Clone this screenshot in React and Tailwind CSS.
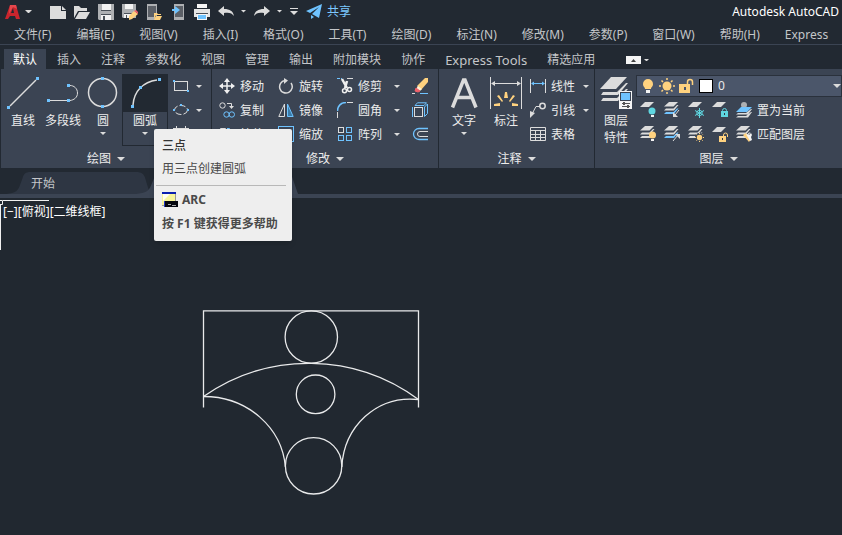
import clsx from "clsx";

const menus = ["文件(F)", "编辑(E)", "视图(V)", "插入(I)", "格式(O)", "工具(T)", "绘图(D)", "标注(N)", "修改(M)", "参数(P)", "窗口(W)", "帮助(H)", "Express"];

const ribbonTabs = ["默认", "插入", "注释", "参数化", "视图", "管理", "输出", "附加模块", "协作", "Express Tools", "精选应用"];

const W = "#dcdcdc";
const B = "#6fc3ff";
const Y = "#ffd27f";
const C = "#5fd6e0";

function Icon({ size = 16, children }) {
  return (
    <svg
      width={size}
      height={size}
      viewBox={`0 0 ${size} ${size}`}
      fill="none"
      stroke={W}
      className="block shrink-0"
      aria-hidden="true"
    >
      {children}
    </svg>
  );
}

function Caret({ className }) {
  return (
    <svg viewBox="0 0 8 4" className={clsx("block shrink-0 fill-[#dcdcdc]", className)} aria-hidden="true">
      <path d="M0 0h8L4 4z" />
    </svg>
  );
}

// stacked sheet used by every layer tool
function Sheets({ middle = W, bottom = W }) {
  return (
    <g stroke="none">
      <path d="M5 0h9L9.500 4.500H0z" fill={W} />
      <path d="M2 6.500h7.500l3.500-3.500h1.500L10 8.500H0z" fill={middle} />
      <path d="M2 10h7.500l3.500-3.500h1.500L10 12H0z" fill={bottom} />
    </g>
  );
}

function Dot({ x, y, size = 3 }) {
  return <rect x={x} y={y} width={size} height={size} fill={B} stroke="none" />;
}

const quickTools = [
  {
    name: "新建",
    icon: <path d="M0 2h11v5h5v8H0zM12 2l4 4h-4z" fill={W} stroke="none" />,
  },
  {
    name: "打开",
    icon: (
      <g fill={W} stroke="none">
        <path d="M0 2h5l2 2h6v3H4L0 14z" />
        <path d="M5 8h11l-4 7H1z" />
      </g>
    ),
  },
  {
    name: "保存",
    icon: (
      <g stroke="none">
        <path d="M0 0h16v16H1l-1-1z" fill="#aeb0b3" />
        <path d="M4 0h9v6H4z" fill="#f2f2f2" />
        <path d="M3 11h10v5H3z" fill="#f2f2f2" />
        <path d="M3 10h10v1H3zM5 12h2v4H5zM3 6h10v1H3z" fill="#4a5058" />
      </g>
    ),
  },
  {
    name: "另存为",
    icon: (
      <g stroke="none">
        <path d="M0 0h14v14H1l-1-1z" fill="#aeb0b3" />
        <path d="M3 0h8v5H3z" fill="#f2f2f2" />
        <path d="M2 10h8v4H2z" fill="#f2f2f2" />
        <path d="M2 9h9v1H2zM4 11h1v3H4z" fill="#4a5058" />
        <path d="M7 12l5-5 4 3-6 5-3 1z" fill={Y} />
        <path d="M12 7l2-1 2 2v2z" fill="#f0616a" />
      </g>
    ),
  },
  {
    name: "从移动设备打开",
    icon: (
      <g stroke="none">
        <path d="M1 0h10v16H1z" fill="#aeb0b3" />
        <path d="M2 2h8v11H2z" fill="#5c6067" />
        <path d="M8 9h3l1 1h3v1h-5l-2 4z" fill={Y} />
        <path d="M10 12h6l-2 4H8z" fill={Y} />
      </g>
    ),
  },
  {
    name: "保存到移动设备",
    icon: (
      <g stroke="none">
        <path d="M4 0h10v16H4z" fill="#aeb0b3" />
        <path d="M5 2h8v11H5z" fill="#5c6067" />
        <path d="M2 5h3V2l5 4-5 4V7H2z" fill={B} />
      </g>
    ),
  },
  {
    name: "打印",
    icon: (
      <g stroke="none">
        <path d="M3 0h10v4H3z" fill="#f5f5f5" />
        <path d="M0 5h16v8H0z" fill="#e6e6e6" />
        <path d="M2 9h12v1H2z" fill="#4a5058" />
        <path d="M3 10h10v6H3z" fill="#f5f5f5" />
        <path d="M4 11h8v4H4z" fill={B} />
      </g>
    ),
  },
  {
    name: "放弃",
    icon: <path d="M0 7l6-5v3c6 0 9 2 10 7-2-3-5-4-10-3v3z" fill={W} stroke="none" />,
    more: true,
  },
  {
    name: "重做",
    icon: <path d="M16 7l-6-5v3c-6 0-9 2-10 7 2-3 5-4 10-3v3z" fill={W} stroke="none" />,
    more: true,
  },
];

const modifyColumns = [
  [
    {
      label: "移动",
      icon: (
        <g>
          <path d="M8 2v12M2 8h12" stroke="#f0f0f0" strokeWidth="1.500" />
          <path d="M8 0l3 4H5zM8 16l3-4H5zM0 8l4-3v6zM16 8l-4-3v6z" fill="#f0f0f0" stroke="none" />
        </g>
      ),
    },
    {
      label: "复制",
      icon: (
        <g>
          <circle cx="3.500" cy="3.500" r="2.700" />
          <circle cx="7.500" cy="12.500" r="2.700" stroke={B} />
          <circle cx="12.800" cy="12.500" r="2.700" stroke={B} />
          <path d="M8 1.500h4.500V4" />
          <path d="M10 4h5L12.500 7z" fill={W} stroke="none" />
        </g>
      ),
    },
    {
      label: "拉伸",
      icon: (
        <g>
          <path d="M1.500 14V2.500h5V14" />
          <path d="M8 2.500h2.500l1 2V14" stroke={B} />
        </g>
      ),
    },
  ],
  [
    {
      label: "旋转",
      icon: (
        <g>
          <path d="M7 2.500a6.300 6.300 0 1 0 6 2.500" strokeWidth="1.500" />
          <path d="M6 0l4 2.500L6 6z" fill={W} stroke="none" />
        </g>
      ),
    },
    {
      label: "镜像",
      icon: (
        <g>
          <path d="M6.500 2v12.500H.8z" />
          <path d="M9.500 2v12.500h5.700z" stroke={B} fill="#3a7ba8" />
        </g>
      ),
    },
    {
      label: "缩放",
      icon: (
        <g>
          <rect x=".5" y=".5" width="15" height="15" stroke={B} />
          <rect x=".5" y="8.500" width="7" height="7" />
        </g>
      ),
    },
  ],
  [
    {
      label: "修剪",
      icon: (
        <g>
          <path d="M0 .5h5" strokeDasharray="3 1" stroke={B} />
          <path d="M10 .5h6" />
          <path d="M5 1l5 9M10 3l-2 7" strokeWidth="2.500" stroke="#f0f0f0" />
          <circle cx="7.500" cy="12.800" r="2" stroke="#f0f0f0" strokeWidth="1.500" />
          <circle cx="12.500" cy="11.500" r="2" stroke="#f0f0f0" strokeWidth="1.500" />
        </g>
      ),
    },
    {
      label: "圆角",
      icon: (
        <g>
          <path d="M.5 9C.5 4 4 .5 9 .5" stroke={B} strokeWidth="1.500" />
          <path d="M.5 10v6M10 .5h6" />
        </g>
      ),
    },
    {
      label: "阵列",
      icon: (
        <g>
          <rect x="1.500" y="1.500" width="5" height="5" />
          <rect x="9.500" y="1.500" width="5" height="5" stroke={B} />
          <rect x="1.500" y="9.500" width="5" height="5" stroke={B} />
          <rect x="9.500" y="9.500" width="5" height="5" stroke={B} />
        </g>
      ),
    },
  ],
];

const modifyExtras = [
  {
    name: "删除",
    icon: (
      <g stroke="none">
        <path d="M5 8l8-8h3v4l-7 8z" fill={Y} />
        <path d="M6 8l4 3-2 2-4-2z" fill="#fff3d6" />
        <path d="M4 10l4 3-2 1-3-1z" fill="#f0616a" stroke="#f0616a" />
        <path d="M0 15h3v1H0z" fill={W} />
        <path d="M8 15h8v1H8z" fill={B} />
      </g>
    ),
  },
  {
    name: "分解",
    icon: (
      <g stroke={B}>
        <path d="M3 3.500L5.500 .8h9l-2.500 2.700zM12.500 14.500l3-3V2L12.500 5z" />
        <rect x="2.500" y="5.500" width="8" height="9" stroke={W} />
        <path d="M.5 5v10" />
      </g>
    ),
  },
  {
    name: "偏移",
    icon: (
      <g>
        <path d="M16 2.500H7a5.500 5.500 0 0 0 0 11h9" stroke={B} strokeWidth="1.300" />
        <path d="M16 5.500H8a2.500 2.500 0 0 0 0 5h8" />
      </g>
    ),
  },
];

const annotateTools = [
  {
    label: "线性",
    more: true,
    icon: (
      <g>
        <path d="M.5 1v14M15.500 1v14" />
        <path d="M2 5.500h12" stroke={B} />
        <path d="M1 5.500l3-2v4zM15 5.500l-3-2v4z" fill={B} stroke="none" />
      </g>
    ),
  },
  {
    label: "引线",
    more: true,
    icon: (
      <g>
        <circle cx="12.500" cy="4" r="2.700" strokeWidth="1.500" />
        <path d="M10 4.500H6L2 12" />
        <path d="M0 9l5 2-5 5z" fill={W} stroke="none" />
      </g>
    ),
  },
  {
    label: "表格",
    icon: <path d="M.5 1.500h15v13H.5zM0 4.500h16M0 8.500h16M0 11.500h16M5.500 5v9M10.500 5v9" />,
  },
];

const layerRows = [
  {
    label: "置为当前",
    icon: (
      <g stroke="none">
        <circle cx="8" cy="3" r="3" fill="#aeb0b3" />
        <path d="M5 5h11l-5 5H0z" fill={B} />
        <path d="M2 11h8l5-4h1l-4 5.500H0zM2 14h8l5-4h1l-4 5.500H0z" fill={W} />
      </g>
    ),
    tools: [
      {
        name: "关闭图层",
        icon: (
          <g stroke="none">
            <path d="M5 0h9L9 5H0z" fill={W} />
            <circle cx="12" cy="9" r="3.500" fill={C} />
            <path d="M11 13h3v2h-3z" fill="#f5f5f5" />
          </g>
        ),
      },
      {
        name: "隔离图层",
        icon: (
          <g>
            <Sheets bottom={B} />
            <path d="M15 8l-4 5" />
            <path d="M9 10v5h5z" fill={W} stroke="none" />
          </g>
        ),
      },
      {
        name: "冻结图层",
        icon: (
          <g>
            <path d="M5 0h9L9 5H0z" fill={W} stroke="none" />
            <path d="M11.500 6v10M7 8.500l9 5M16 8.500l-9 5" stroke={C} />
            <circle cx="11.500" cy="11" r="2.700" stroke={C} />
          </g>
        ),
      },
      {
        name: "锁定图层",
        icon: (
          <g>
            <path d="M5 0h9L9 5H0z" fill={W} stroke="none" />
            <path d="M10.500 10V8.500a2 2 0 0 1 4 0V10" stroke={C} />
            <path d="M9 9h7v6H9z" fill={C} stroke="none" />
            <path d="M12 11h1v2h-1z" fill="#2f3744" stroke="none" />
          </g>
        ),
      },
    ],
  },
  {
    label: "匹配图层",
    icon: (
      <g stroke="none">
        <Sheets />
        <path d="M7 9l3-2 5 6-2 3z" fill={Y} />
        <path d="M10 8l3 1 2-2 1 2-1 2 1 3-2 1z" fill="#f5f5f5" />
      </g>
    ),
    tools: [
      {
        name: "打开所有图层",
        icon: (
          <g stroke="none">
            <Sheets />
            <circle cx="12.500" cy="9" r="3.500" fill={Y} />
            <path d="M11 13h3v2h-3z" fill="#f5f5f5" />
          </g>
        ),
      },
      {
        name: "取消隔离",
        icon: (
          <g>
            <Sheets bottom={B} />
            <path d="M9 15l5-6" />
            <path d="M11 8h5v5z" fill={W} stroke="none" />
          </g>
        ),
      },
      {
        name: "解冻所有图层",
        icon: (
          <g>
            <Sheets />
            <circle cx="11.500" cy="11.500" r="4.500" fill="#3b4453" stroke="none" />
            <circle cx="11.500" cy="11.500" r="2.700" fill={Y} stroke="none" />
            <path
              d="M11.500 7v1M11.500 15v1M7 11.500h1M15 11.500h1M8.500 8.500l.7.7M14 14l.7.7M14.700 8.500l-.7.7M9.200 14l-.7.7"
              stroke={Y}
            />
          </g>
        ),
      },
      {
        name: "解锁图层",
        icon: (
          <g>
            <path d="M5 1h9L9 6H0z" fill={W} stroke="none" />
            <path d="M11.500 11V9a2 2 0 0 1 4 0v2" stroke={Y} />
            <path d="M7 10h7v6H7z" fill={Y} stroke="none" />
            <path d="M10 12h1v2h-1z" fill="#2f3744" stroke="none" />
          </g>
        ),
      },
    ],
  },
];

function LargeTool({ label, icon, more }) {
  return (
    <button className="flex w-9 shrink-0 flex-col items-center pt-[3px] leading-[18px]">
      <Icon size={32}>{icon}</Icon>
      <span className="pt-[3px] whitespace-nowrap">{label}</span>
      {more && <Caret className="mt-[2px] w-[6px]" />}
    </button>
  );
}

function SmallTool({ label, icon }) {
  return (
    <button className="flex items-center gap-[5px] whitespace-nowrap">
      <Icon>{icon}</Icon>
      <span className="pt-[2px]">{label}</span>
    </button>
  );
}

function IconButton({ name, children }) {
  return (
    <button aria-label={name}>
      <Icon>{children}</Icon>
    </button>
  );
}

function MoreButton({ name }) {
  return (
    <button aria-label={`${name} 选项`}>
      <Caret className="w-[6px]" />
    </button>
  );
}

function Panel({ title, className, children }) {
  return (
    <section className={clsx("flex shrink-0 flex-col border-r border-[#222932] bg-[#3b4453] pt-[5px]", className)}>
      <div className="flex h-[72px]">{children}</div>
      <button className="flex h-[22px] items-center justify-center gap-[6px] pt-1">
        {title}
        <Caret className="w-2" />
      </button>
    </section>
  );
}

function ArcTooltip() {
  return (
    <div
      id="arc-tip"
      role="tooltip"
      className="absolute top-[55px] left-8 z-10 w-[138px] rounded-[2px] bg-[#eeeeee] pb-[7px] text-left text-[#4a4a4a] shadow-md"
    >
      <p className="px-2 pt-[7px] font-medium leading-5 text-[#333]">三点</p>
      <p className="px-2 pt-[3px] leading-5">用三点创建圆弧</p>
      <hr className="mt-[6px] mr-[6px] ml-[2px] border-[#b8b8b8]" />
      <p className="flex items-center gap-1 px-2 pt-[4px] font-bold leading-5">
        <Icon>
          <g stroke="none">
            <rect width="14" height="14" fill="#f7f49a" />
            <path d="M1 2h7L1 9z" fill="#fffef0" />
            <path d="M0 0h14v2H0z" fill="#0a1fb0" />
            <path d="M13 2h1v7h-1zM0 13h3v1H0z" fill="#999" />
            <path d="M3 9h13v6H3z" fill="#05070f" />
            <path d="M2 9h1v6H2z" fill="#2237c8" />
            <path d="M6 12h3v1H6zM10 13h4v1h-4z" fill="#aaa" />
          </g>
        </Icon>
        ARC
      </p>
      <p className="px-2 pt-[4px] font-bold leading-5 whitespace-nowrap">按 F1 键获得更多帮助</p>
    </div>
  );
}

function DrawPanel() {
  return (
    <Panel title="绘图" className="border-l">
      <div className="flex gap-1 pl-1">
        <LargeTool
          label="直线"
          icon={
            <>
              <path d="M3 29L29 3" strokeWidth="1.500" />
              <Dot x={0} y={29} />
              <Dot x={29} y={0} />
            </>
          }
        />
        <LargeTool
          label="多段线"
          icon={
            <>
              <path d="M2 23.500h19M23 8.500c4 0 7.500 3 7.500 7.500S27 23 23 23.500" />
              <Dot x={0} y={22} />
              <Dot x={20} y={22} />
              <Dot x={20} y={7} />
            </>
          }
        />
        <LargeTool
          label="圆"
          more
          icon={
            <>
              <circle cx="15.500" cy="15.500" r="14" strokeWidth="1.500" />
              <Dot x={14} y={0} />
              <Dot x={14} y={28} />
            </>
          }
        />
      </div>
      <div className="relative ml-px">
        <button
          aria-describedby="arc-tip"
          className="flex h-full w-[46px] flex-col items-center border border-[#222932] leading-[18px]"
        >
          <span className="flex w-full justify-center bg-[#222932] pt-[2px] pb-[3px]">
            <Icon size={32}>
              <path d="M4 28C5 14 14 5 28 3" strokeWidth="1.500" />
              <Dot x={2} y={28} />
              <Dot x={10} y={9} />
              <Dot x={29} y={1} />
            </Icon>
          </span>
          圆弧
          <Caret className="mt-[2px] w-[6px]" />
        </button>
        <ArcTooltip />
      </div>
      <div className="flex flex-col pr-[9px] pl-[5px]">
        {[
          {
            name: "矩形",
            icon: (
              <>
                <rect x="1.500" y="3.500" width="13" height="9" />
                <Dot x={0} y={2} size={2} />
                <Dot x={14} y={12} size={2} />
              </>
            ),
          },
          {
            name: "椭圆",
            icon: (
              <>
                <ellipse cx="8" cy="8" rx="6.500" ry="4.500" strokeDasharray="6 2" />
                <Dot x={0} y={7} size={2} />
                <Dot x={7} y={2} size={2} />
                <Dot x={14} y={7} size={2} />
              </>
            ),
          },
          {
            name: "图案填充",
            icon: <path d="M0 2.500h16M3.500 0v16M12.500 0v16" />,
          },
        ].map((tool) => (
          <div key={tool.name} className="flex h-6 items-center gap-[7px]">
            <IconButton name={tool.name}>{tool.icon}</IconButton>
            <MoreButton name={tool.name} />
          </div>
        ))}
      </div>
    </Panel>
  );
}

function ModifyPanel() {
  return (
    <Panel title="修改">
      <div className="flex gap-[14px] pl-[7px]">
        {modifyColumns.map((column, i) => (
          <div key={i} className="grid grid-rows-3">
            {column.map((tool) => (
              <SmallTool key={tool.label} {...tool} />
            ))}
          </div>
        ))}
      </div>
      <div className="grid w-[30px] grid-rows-3 items-center justify-center">
        {modifyColumns[2].map((tool) => (
          <MoreButton key={tool.label} name={tool.label} />
        ))}
      </div>
      <div className="grid grid-rows-3 items-center pr-[10px]">
        {modifyExtras.map((tool) => (
          <IconButton key={tool.name} name={tool.name}>
            {tool.icon}
          </IconButton>
        ))}
      </div>
    </Panel>
  );
}

function AnnotatePanel() {
  return (
    <Panel title="注释">
      <div className="flex gap-[6px] px-[7px] pr-[6px]">
        <LargeTool
          label="文字"
          more
          icon={<path d="M4.500 30.500L15.500 3h1.500l11 27.500M8 20.500h17" strokeWidth="3.500" />}
        />
        <LargeTool
          label="标注"
          icon={
            <>
              <path d="M.5 0v32M31.500 0v32M3 6.500h26" />
              <path d="M1 6.500L5 4v5zM31 6.500L27 4v5z" fill={W} stroke="none" />
              <g fill={Y} stroke="none">
                <path d="M15 15h2l1 6h-4zM7 19l2-1 4 6-1 1zM25 19l-2-1-4 6 1 1zM4 27l6-1v3H4zM28 27l-6-1v3h6z" />
              </g>
            </>
          }
        />
      </div>
      <div className="grid grid-rows-3 pr-[5px]">
        {annotateTools.map((tool) => (
          <div key={tool.label} className="flex items-center gap-2">
            <SmallTool label={tool.label} icon={tool.icon} />
            {tool.more && <MoreButton name={tool.label} />}
          </div>
        ))}
      </div>
    </Panel>
  );
}

function LayerSelect() {
  return (
    <div className="mt-px flex h-[22px] items-center border border-[#2a313c] bg-[#4b566a] pl-[3px]">
      <div className="flex gap-[3px]">
        <IconButton name="开/关">
          <g stroke="none">
            <path d="M8 1a5 5 0 0 1 5 5c0 3-2 3-2 5H5c0-2-2-2-2-5a5 5 0 0 1 5-5z" fill={Y} />
            <path d="M6 12h4v3H6z" fill="#f5f5f5" />
          </g>
        </IconButton>
        <IconButton name="冻结/解冻">
          <circle cx="8" cy="8" r="4.500" fill={Y} stroke="none" />
          <path
            d="M8 0v2M8 14v2M0 8h2M14 8h2M2.500 2.500l1.500 1.500M12 12l1.500 1.500M13.500 2.500L12 4M4 12l-1.500 1.500"
            stroke={Y}
            strokeWidth="1.500"
          />
        </IconButton>
        <IconButton name="锁定/解锁">
          <path d="M9.500 7V4a2.500 2.500 0 0 1 5 0v3" stroke={Y} strokeWidth="1.500" />
          <path d="M1 6h11v9H1z" fill={Y} stroke="none" />
          <path d="M6 9h2v3H6z" fill="#4b566a" stroke="none" />
        </IconButton>
      </div>
      <span className="ml-[5px] size-[14px] shrink-0 border border-black bg-white" />
      <div className="relative flex min-w-0 flex-1 items-center">
        <select aria-label="图层" className="w-full appearance-none bg-transparent pl-[5px] text-[#e8e8e8] outline-none">
          <option>0</option>
        </select>
        <Caret className="pointer-events-none absolute right-0 w-2" />
      </div>
    </div>
  );
}

function LayersPanel() {
  return (
    <Panel title="图层" className="min-w-0 flex-1 border-r-0">
      <button className="ml-[3px] flex w-9 shrink-0 flex-col items-center pt-[3px] leading-[17px]">
        <Icon size={32}>
          <g fill={W} stroke="none">
            <path d="M11 0h16L16 12H0z" />
            <path d="M3 15h14l9-9h2L18 18H1z" />
            <path d="M3 21h14l9-9h2L18 24H1z" />
            <path d="M19 14h13v18H19z" fill="#f5f5f5" />
            <path d="M20 15h11v9H20z" fill="#3b4453" />
            <path d="M21 16h9v7h-9z" fill={B} />
            <path d="M22 26h8v1h-8zM22 29h8v1h-8zM23 25h2v3h-2zM27 28h2v3h-2z" fill="#555" />
          </g>
        </Icon>
        <span className="pt-[3px]">图层</span>
        <span>特性</span>
      </button>
      <div className="ml-[2px] flex min-w-0 flex-1 flex-col">
        <LayerSelect />
        <div className="grid flex-1 grid-rows-2 pt-px">
          {layerRows.map((row) => (
            <div key={row.label} className="flex items-center gap-2 pl-1">
              {row.tools.map((tool) => (
                <IconButton key={tool.name} name={tool.name}>
                  {tool.icon}
                </IconButton>
              ))}
              <SmallTool label={row.label} icon={row.icon} />
            </div>
          ))}
        </div>
      </div>
    </Panel>
  );
}

function TitleBar() {
  return (
    <header className="flex h-[23px] items-center pr-[3px] pl-[5px]">
      <button aria-label="应用程序菜单" className="flex items-center gap-1">
        <Icon>
          <path d="M0 15L5 1h6l4 14h-4l-1-3H5l-2 3zM6 9h3L8 4z" fill="#c9252d" fillRule="evenodd" stroke="none" />
          <path d="M5 1h6l1 4-4-2-4 7z" fill="#e5484d" stroke="none" />
        </Icon>
        <Caret className="w-[7px]" />
      </button>
      <div className="ml-[18px] flex items-center gap-2">
        {quickTools.map((tool) => (
          <div key={tool.name} className="flex items-center gap-[7px]">
            <IconButton name={tool.name}>{tool.icon}</IconButton>
            {tool.more && (
              <button aria-label={`${tool.name} 选项`}>
                <Caret className="w-[5px]" />
              </button>
            )}
          </div>
        ))}
        <button aria-label="自定义快速访问工具栏" className="flex flex-col items-center gap-[2px]">
          <span className="h-px w-2 bg-[#dcdcdc]" />
          <Caret className="w-2" />
        </button>
      </div>
      <button className="ml-2 flex items-center gap-[5px] text-[#7cc8ff]">
        <Icon>
          <path d="M16 0L0 7l4 2 9-6-7 7 7 4zM5 11l3 2-3 2z" fill={B} stroke="none" />
        </Icon>
        共享
      </button>
      <h1 className="ml-auto text-white">Autodesk AutoCAD</h1>
    </header>
  );
}

function RibbonTabs() {
  return (
    <div role="tablist" className="flex h-6 items-end gap-[2px] overflow-hidden pl-1 whitespace-nowrap">
      {ribbonTabs.map((tab, i) => (
        <button
          key={tab}
          role="tab"
          aria-selected={i === 0}
          className={clsx(
            "h-5 shrink-0 px-[9px] pt-[2px]",
            i === 0 ? "bg-[#3b4453] text-white" : "text-[#c4c6c9]",
            tab === "Express Tools" && "text-[13px]"
          )}
        >
          {tab}
        </button>
      ))}
      <button aria-label="最小化功能区" className="ml-5 flex h-5 items-center gap-[3px] pt-[2px]">
        <span className="flex h-2 w-[15px] items-center justify-center bg-[#f5f5f5]">
          <svg viewBox="0 0 5 3" className="w-[5px] fill-[#444]" aria-hidden="true">
            <path d="M0 3h5L2.500 0z" />
          </svg>
        </span>
        <Caret className="w-[5px]" />
      </button>
    </div>
  );
}

function FileTabShape({ className }) {
  return (
    <svg
      viewBox="0 0 150 22"
      preserveAspectRatio="none"
      className={clsx("absolute inset-0 -z-10 h-full w-full", className)}
      aria-hidden="true"
    >
      <path d="M0 22c10 0 15-2 17-8l3-8c1-4 3-6 8-6h108c5 0 8 2 9 6l5 16z" />
    </svg>
  );
}

function FileTabs() {
  return (
    <nav className="isolate flex border-b-4 border-[#3b4453] pt-1">
      <button className="relative ml-[3px] h-[22px] w-[147px] pt-[2px] pl-7 text-left text-[#c4c6c9]">
        <FileTabShape className="fill-[#2e3643]" />
        开始
      </button>
      <button aria-label="当前图形" className="relative -ml-[18px] h-[22px] w-[166px]">
        <FileTabShape className="fill-[#3b4453]" />
      </button>
    </nav>
  );
}

function Drawing() {
  return (
    <main className="flex-1 bg-[#212830] text-white">
      <div className="relative h-[52px] pt-1 pl-[3px] leading-5">
        <svg width="50" height="50" viewBox="0 0 50 50" fill="none" stroke="#f0f0f0" className="absolute top-[2px] left-0" aria-hidden="true">
          <path d="M3 .5h46M.5 5v45M0 .5h2.500v4H0" />
        </svg>
        [−][俯视][二维线框]
      </div>
      <svg
        width="220"
        height="190"
        viewBox="200 308 220 190"
        fill="none"
        stroke="#e9eaeb"
        strokeWidth="1.300"
        className="mt-[58px] ml-[200px] block"
        role="img"
        aria-label="零件轮廓"
      >
        <path d="M203.500 407.500V310.800h215v96.700" />
        <circle cx="311.300" cy="337" r="26.200" />
        <circle cx="315.600" cy="394.300" r="19.300" />
        <circle cx="313.600" cy="465.800" r="28.200" />
        <path d="M203.500 396.500A184 184 0 0 1 418.500 399.500" />
        <path d="M203.500 396.500C248 396.500 282 428 285.400 467" />
        <path d="M418.500 399.500C376 395 344 427 341.800 467" />
      </svg>
    </main>
  );
}

function App() {
  return (
    <div className="flex min-h-screen flex-col overflow-hidden bg-[#222932] font-['Noto_Sans','Noto_Sans_CJK_SC',sans-serif] text-[12px] leading-[18px] text-[#ececec]">
      <TitleBar />
      <nav className="flex h-[22px] items-center gap-[25px] border-b border-[#3b4453] pt-[2px] pl-[14px] whitespace-nowrap text-[#c4c6c9]">
        {menus.map((menu) => (
          <button key={menu}>{menu}</button>
        ))}
      </nav>
      <RibbonTabs />
      <div className="flex">
        <DrawPanel />
        <ModifyPanel />
        <AnnotatePanel />
        <LayersPanel />
      </div>
      <FileTabs />
      <Drawing />
    </div>
  );
}

export default App;
